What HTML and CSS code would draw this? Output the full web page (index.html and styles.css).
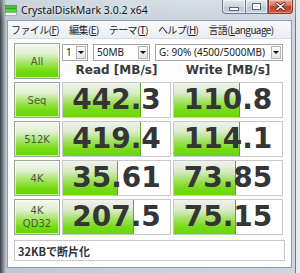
FILE: index.html
```html
<!DOCTYPE html>
<html lang="ja">
<head>
<meta charset="utf-8">
<title>CrystalDiskMark</title>
<link rel="stylesheet" href="styles.css">
</head>
<body>
<div class="window">
  <div class="titlebar">
    <svg class="appicon" width="12" height="11" viewBox="0 0 12 11">
      <rect x="0.5" y="0.5" width="11" height="3" fill="#3ccf2a" stroke="#2a8a20" stroke-width="0.6"/>
      <rect x="0.5" y="4" width="11" height="3" fill="#5ee040" stroke="#2a8a20" stroke-width="0.6"/>
      <rect x="0.5" y="7.5" width="11" height="3" fill="#f2f4f4" stroke="#8a9096" stroke-width="0.6"/>
    </svg>
    <span class="title">CrystalDiskMark 3.0.2 x64</span>
    <div class="caption">
      <div class="cbtn cmin"><span class="g-min"></span></div>
      <div class="cbtn cmax"><span class="g-max"></span></div>
      <div class="cbtn cclose">
        <svg width="11" height="9" viewBox="0 0 11 9"><path d="M2 1.5 L9 7.5 M9 1.5 L2 7.5" stroke="#5a2a22" stroke-width="3" stroke-linecap="round"/><path d="M2 1.5 L9 7.5 M9 1.5 L2 7.5" stroke="#ffffff" stroke-width="1.6" stroke-linecap="round"/></svg>
      </div>
    </div>
  </div>
  <div class="client">
    <div class="menubar">
      <span class="mi">ファイル(<u>F</u>)</span>
      <span class="mi">編集(<u>E</u>)</span>
      <span class="mi">テーマ(<u>T</u>)</span>
      <span class="mi">ヘルプ(<u>H</u>)</span>
      <span class="mi">言語(<u>L</u>anguage)</span>
    </div>
    <div class="main">
      <div class="grid">
        <div class="btn">All</div>
        <div class="top">
          <div class="combos">
            <div class="combo w1"><span class="ctext">1</span><span class="arrow"></span></div>
            <div class="combo w2"><span class="ctext">50MB</span><span class="arrow"></span></div>
            <div class="combo w3"><span class="ctext">G: 90% (4500/5000MB)</span><span class="arrow"></span></div>
          </div>
          <div class="headers">
            <span class="hdr">Read [MB/s]</span>
            <span class="hdr">Write [MB/s]</span>
          </div>
        </div>

        <div class="btn">Seq</div>
        <div class="res"><div class="bar" style="width:72.9%"></div><span class="num">442.3</span></div>
        <div class="res"><div class="bar" style="width:60.9%"></div><span class="num">110.8</span></div>

        <div class="btn">512K</div>
        <div class="res"><div class="bar" style="width:72.5%"></div><span class="num">419.4</span></div>
        <div class="res"><div class="bar" style="width:61.1%"></div><span class="num">114.1</span></div>

        <div class="btn">4K</div>
        <div class="res"><div class="bar" style="width:51.0%"></div><span class="num">35.61</span></div>
        <div class="res"><div class="bar" style="width:57.4%"></div><span class="num">73.85</span></div>

        <div class="btn two">4K<br>QD32</div>
        <div class="res"><div class="bar" style="width:66.3%"></div><span class="num">207.5</span></div>
        <div class="res"><div class="bar" style="width:57.5%"></div><span class="num">75.15</span></div>
      </div>
      <div class="comment">32KBで断片化</div>
    </div>
  </div>
</div>
</body>
</html>
```

FILE: styles.css
```css
html, body {
  margin: 0;
  padding: 0;
}
body {
  width: 300px;
  height: 273px;
  overflow: hidden;
  background: #e9ecef;
}
.window {
  width: 296px;
  height: 273px;
  display: flex;
  flex-direction: column;
  background:
    linear-gradient(to right, #3a3e44 0px, #7d858d 3px, #bcc7d2 6px, #c7d1db 40%, #cdd6df 100%);
  box-shadow: inset -1px 0 0 #6f7c88;
}
.titlebar {
  height: 21px;
  flex: none;
  display: flex;
  align-items: flex-start;
  background: linear-gradient(to bottom, rgba(255,255,255,0.25), rgba(255,255,255,0));
}
.appicon {
  margin: 5px 0 0 5px;
  flex: none;
}
.title {
  margin: 3px 0 0 4px;
  font-family: "Noto Sans", "Open Sans", sans-serif;
  font-size: 10.5px;
  line-height: 14px;
  color: #141414;
  text-shadow: 0 0 5px rgba(255,255,255,0.9);
}
.caption {
  margin-left: auto;
  margin-right: 3px;
  display: flex;
}
.cbtn {
  height: 14px;
  box-sizing: border-box;
  border: 1px solid #6e7b88;
  border-top: none;
  display: flex;
  align-items: center;
  justify-content: center;
}
.cmin {
  width: 23px;
  border-radius: 0 0 0 4px;
  border-right: none;
  background: linear-gradient(to bottom, #e2e9f0 0%, #cbd5df 50%, #b9c6d3 51%, #c9d6e2 100%);
  box-shadow: inset 0 0 0 1px rgba(255,255,255,0.55);
}
.cmax {
  width: 23px;
  background: linear-gradient(to bottom, #e2e9f0 0%, #cbd5df 50%, #b9c6d3 51%, #c9d6e2 100%);
  box-shadow: inset 0 0 0 1px rgba(255,255,255,0.55);
}
.cclose {
  width: 25px;
  border-radius: 0 0 4px 0;
  border-color: #7a3a30;
  background: linear-gradient(to bottom, #e5a595 0%, #d4715b 45%, #c2452c 50%, #d0553a 100%);
  box-shadow: inset 0 0 0 1px rgba(255,255,255,0.35);
}
.g-min {
  width: 8px;
  height: 2px;
  margin-top: 4px;
  background: #ffffff;
  border: 1px solid #5a6672;
}
.g-max {
  width: 7px;
  height: 5px;
  box-sizing: border-box;
  border: 2px solid #ffffff;
  outline: 1px solid #5a6672;
}
.client {
  margin: 0 5px 0 8px;
  height: 246px;
  flex: none;
  display: flex;
  flex-direction: column;
  background: #fdfdfd;
  box-shadow: 0 0 0 1px #8f9daa;
}
.menubar {
  height: 17px;
  flex: none;
  display: flex;
  align-items: center;
  gap: 10px;
  padding-left: 3px;
  background: linear-gradient(to bottom, #f7f9fc, #eaeff5);
  border-bottom: 1px solid #d6dce3;
  font-family: "Noto Sans CJK JP", "Noto Sans", sans-serif;
  font-size: 10px;
  letter-spacing: -0.6px;
  color: #1e1e1e;
}
.mi u {
  text-decoration: underline;
  text-underline-offset: 1px;
}
.main {
  flex: 1;
  padding: 4px 6px 6px 6px;
  display: flex;
  flex-direction: column;
}
.grid {
  display: grid;
  grid-template-columns: 46px 109px 110px;
  grid-template-rows: repeat(5, 36px);
  column-gap: 2px;
  row-gap: 3px;
}
.btn {
  box-sizing: border-box;
  border: 1px solid #9ba59a;
  background: linear-gradient(to bottom, #f4f7f1 0%, #dff0cf 30%, #9fe35a 58%, #74db10 80%, #66d600 100%);
  box-shadow: inset 0 0 0 1px rgba(255,255,255,0.6);
  display: flex;
  align-items: center;
  justify-content: center;
  text-align: center;
  font-family: "DejaVu Sans", sans-serif;
  font-size: 10px;
  line-height: 13px;
  color: #4b5840;
}
.top {
  grid-column: 2 / 4;
  display: flex;
  flex-direction: column;
}
.combos {
  margin-top: 1px;
  display: flex;
  gap: 5px;
}
.combo {
  height: 17px;
  box-sizing: border-box;
  border: 1px solid #a3a3a3;
  background: #ffffff;
  display: flex;
  align-items: center;
  justify-content: space-between;
  padding: 0 1px 0 3px;
}
.w1 { width: 26px; }
.w2 { width: 57px; }
.w3 { width: 128px; }
.ctext {
  font-family: "Noto Sans", sans-serif;
  font-size: 10px;
  line-height: 13px;
  color: #1a1a1a;
  white-space: nowrap;
}
.arrow {
  width: 10px;
  height: 13px;
  box-sizing: border-box;
  border: 1px solid #b4b4b4;
  background: linear-gradient(to bottom, #fafafa, #e4e4e4);
  display: flex;
  align-items: center;
  justify-content: center;
  flex: none;
}
.arrow::after {
  content: "";
  width: 0;
  height: 0;
  border-left: 3px solid transparent;
  border-right: 3px solid transparent;
  border-top: 3px solid #111;
}
.headers {
  flex: 1;
  display: grid;
  grid-template-columns: 109px 110px;
  column-gap: 2px;
  align-items: center;
}
.hdr {
  text-align: center;
  font-family: "DejaVu Sans", sans-serif;
  font-weight: bold;
  font-size: 12px;
  color: #3a3a3a;
}
.res {
  position: relative;
  box-sizing: border-box;
  border: 1px solid #c9c9c9;
  background: #ffffff;
  display: flex;
  align-items: center;
  justify-content: center;
  overflow: hidden;
}
.bar {
  position: absolute;
  left: 0;
  top: 0;
  bottom: 0;
  box-sizing: border-box;
  border-right: 1px solid #5fa52a;
  background: linear-gradient(to bottom, #f1f2ef 0%, #d9ebc8 30%, #9ee05a 58%, #78da18 80%, #6ad60c 100%);
}
.num {
  position: relative;
  font-family: "DejaVu Sans", sans-serif;
  font-weight: bold;
  font-size: 28px;
  line-height: 34px;
  color: #353535;
}
.comment {
  margin-top: 5px;
  height: 21px;
  box-sizing: border-box;
  border: 1px solid #c9c9c9;
  background: #ffffff;
  display: flex;
  align-items: center;
  padding-left: 3px;
  font-family: "Noto Sans CJK JP", sans-serif;
  font-weight: bold;
  font-size: 11px;
  color: #333333;
}
```
